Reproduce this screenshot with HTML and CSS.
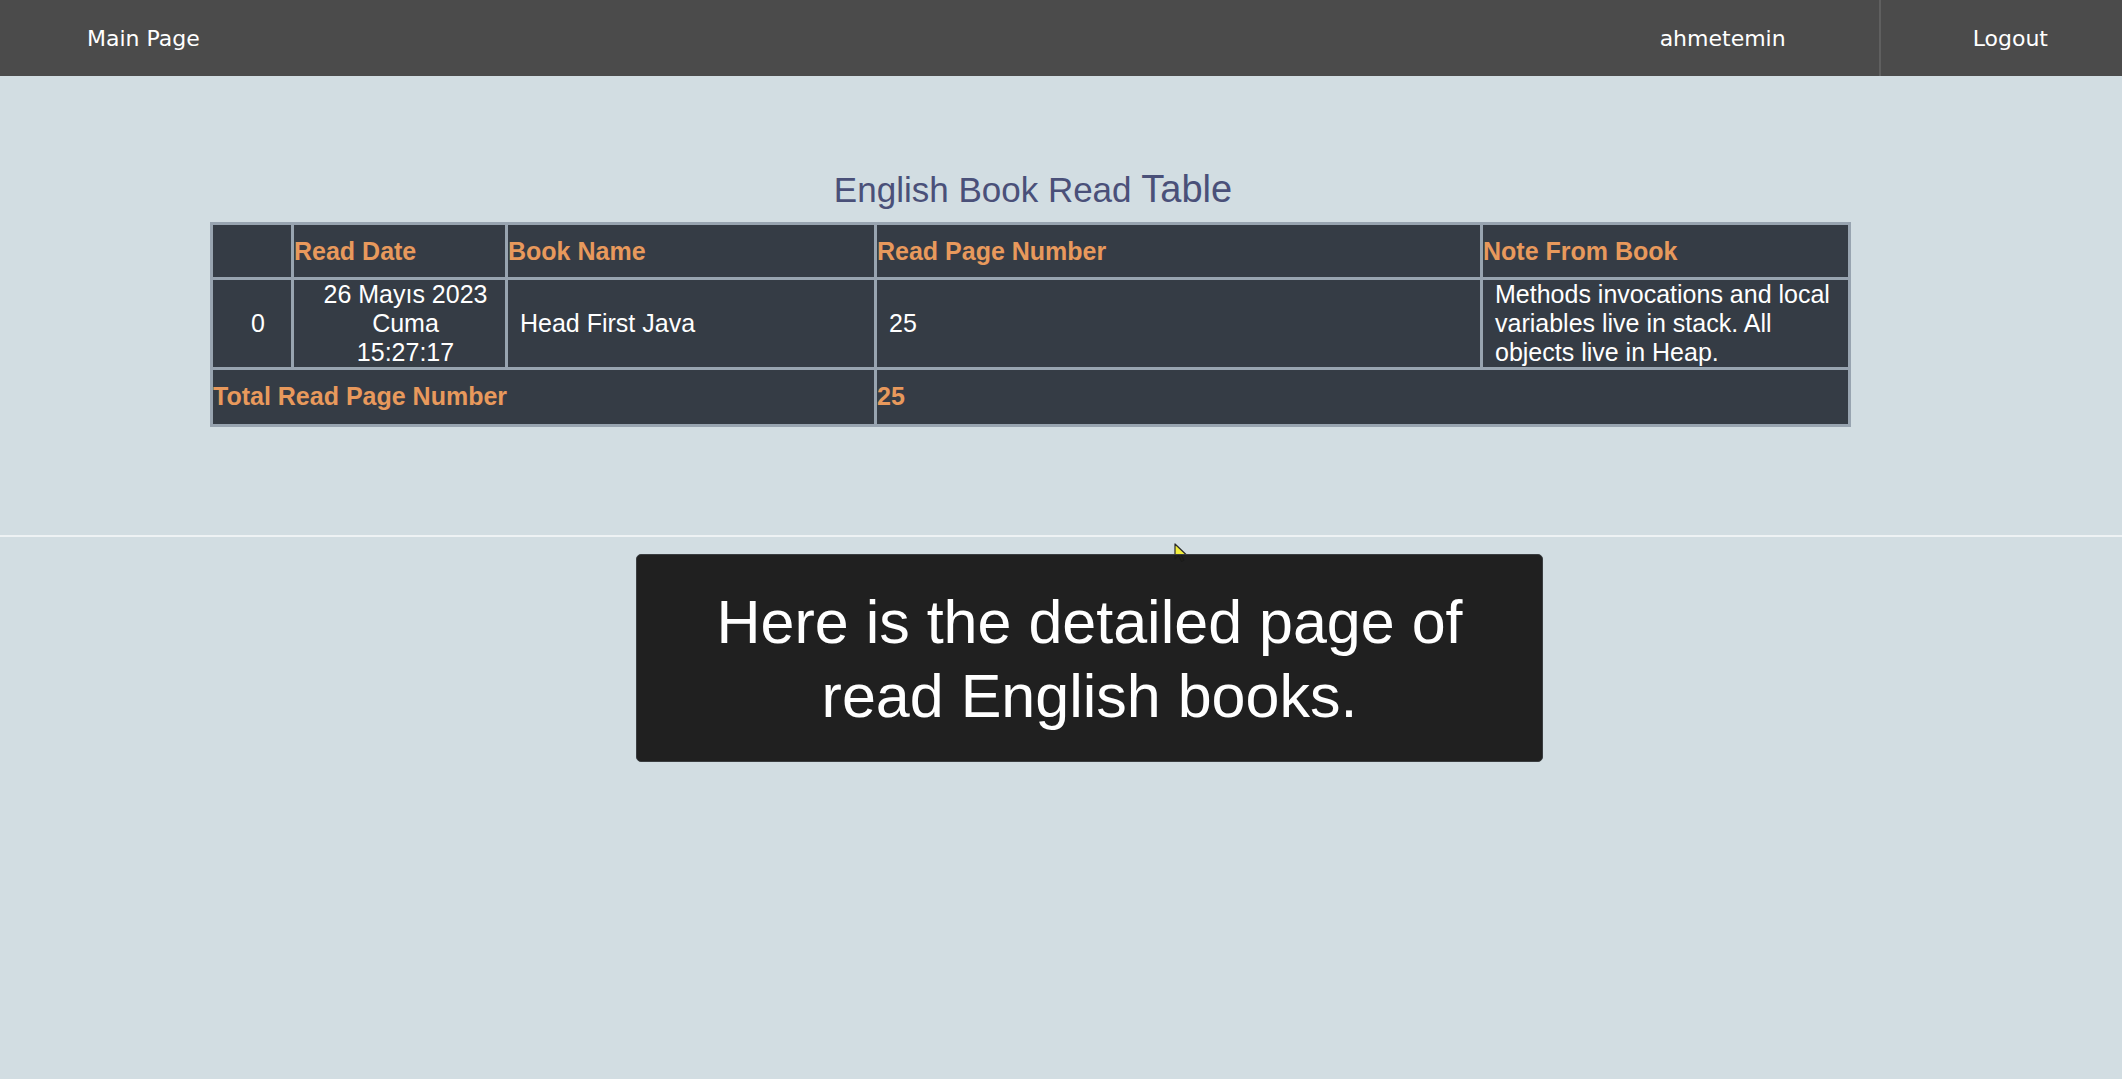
FILE: index.html
```html
<!DOCTYPE html>
<html lang="en">
<head>
<meta charset="utf-8">
<title>English Book Read Table</title>
<link rel="stylesheet" href="styles.css">
</head>
<body>
<nav class="navbar">
  <a class="nav-link nav-home" href="#">Main Page</a>
  <div class="nav-right">
    <a class="nav-link nav-user" href="#">ahmetemin</a>
    <a class="nav-link nav-logout" href="#">Logout</a>
  </div>
</nav>

<main class="content">
  <section class="table-wrap">
    <h2 class="table-title">English Book Read <span class="title-big">Table</span></h2>
    <table class="book-table">
      <colgroup>
        <col class="c-idx">
        <col class="c-date">
        <col class="c-name">
        <col class="c-pages">
        <col class="c-note">
      </colgroup>
      <thead>
        <tr>
          <th></th>
          <th>Read Date</th>
          <th>Book Name</th>
          <th>Read Page Number</th>
          <th>Note From Book</th>
        </tr>
      </thead>
      <tbody>
        <tr class="data-row">
          <td class="center">0</td>
          <td class="center">26 Mayıs 2023<br>Cuma<br>15:27:17</td>
          <td>Head First Java</td>
          <td>25</td>
          <td>Methods invocations and local variables live in stack. All objects live in Heap.</td>
        </tr>
        <tr class="total-row">
          <th colspan="3">Total Read Page Number</th>
          <th colspan="2">25</th>
        </tr>
      </tbody>
    </table>
  </section>
</main>

<div class="divider"></div>

<svg class="cursor" width="14" height="20" viewBox="0 0 14 20" aria-hidden="true">
  <path d="M1 1 L1 16 L4.5 12.5 L7.5 18.5 L10 17.3 L7 11.5 L12 11.5 Z" fill="#f2ee3a" stroke="#2a2a2a" stroke-width="1.2" stroke-linejoin="round"/>
</svg>

<div class="caption">Here is the detailed page of<br>read English books.</div>
</body>
</html>
```

FILE: styles.css
```css
html, body {
  margin: 0;
  padding: 0;
}

body {
  background: #d2dde2;
  min-height: 1079px;
  position: relative;
  font-family: "Liberation Sans", Arial, sans-serif;
}

/* ---------- navbar ---------- */
.navbar {
  height: 76px;
  background: #4b4b4b;
  display: flex;
  align-items: stretch;
  font-family: "DejaVu Sans", Verdana, sans-serif;
  font-size: 22px;
}

.nav-link {
  color: #ffffff;
  text-decoration: none;
  display: flex;
  align-items: center;
}

.nav-home {
  padding-left: 87px;
}

.nav-right {
  margin-left: auto;
  display: flex;
  align-items: stretch;
}

.nav-user {
  padding: 0 93px 0 0;
}

.nav-logout {
  border-left: 2px solid #5f5f5f;
  padding: 0 74px 0 92px;
}

/* ---------- content ---------- */
.content {
  padding: 94px 0 0 210px;
}

.table-wrap {
  width: 1638px;
}

.table-title {
  margin: 0 0 13px 0;
  padding-left: 8px;
  text-align: center;
  font-size: 35px;
  line-height: 39px;
  font-weight: normal;
  color: #4a5079;
}

.title-big {
  font-size: 38px;
}

.book-table {
  width: 1638px;
  table-layout: fixed;
  border-collapse: collapse;
  border: 3px solid #a3aeb9;
  font-size: 25px;
  color: #ffffff;
}

.c-idx { width: 81px; }
.c-date { width: 214px; }
.c-name { width: 369px; }
.c-pages { width: 606px; }
.c-note { width: 368px; }

.book-table th,
.book-table td {
  background: #353c45;
  border: 3px solid #98a4b0;
  vertical-align: middle;
}

.book-table th {
  color: #e8995c;
  font-weight: bold;
  text-align: left;
  padding: 12px 0;
  line-height: 28px;
}

.book-table td {
  padding: 0 0 0 12px;
  line-height: 29px;
  text-align: left;
}

.book-table td.center {
  text-align: center;
}

.data-row {
  height: 88px;
}

.book-table .total-row th {
  padding: 12px 0 14px 0;
}

/* ---------- divider ---------- */
.divider {
  margin-top: 108px;
  height: 2px;
  background: #eef2f4;
}

/* ---------- overlays ---------- */
.cursor {
  position: absolute;
  left: 1174px;
  top: 543px;
  z-index: 1;
}

.caption {
  position: absolute;
  left: 636px;
  top: 554px;
  width: 907px;
  height: 208px;
  box-sizing: border-box;
  padding-top: 30px;
  background: rgba(26, 26, 26, 0.97);
  border: 1px solid #3a3d40;
  border-radius: 5px;
  color: #ffffff;
  font-size: 61px;
  line-height: 74px;
  text-align: center;
  z-index: 2;
}
```
